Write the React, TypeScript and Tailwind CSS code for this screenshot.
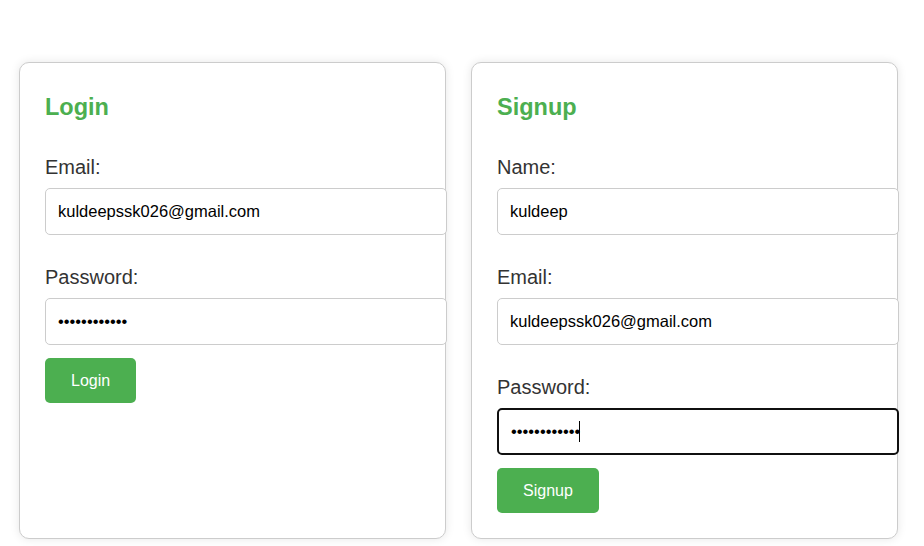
import React from "react";

const font = { fontFamily: '"Liberation Sans", Arial, sans-serif' };

type Field = { label: string; type: string; value: string; focused?: boolean };

const loginFields: Field[] = [
  { label: "Email:", type: "email", value: "kuldeepssk026@gmail.com" },
  { label: "Password:", type: "password", value: "kuldeep12345" },
];

const signupFields: Field[] = [
  { label: "Name:", type: "text", value: "kuldeep" },
  { label: "Email:", type: "email", value: "kuldeepssk026@gmail.com" },
  { label: "Password:", type: "password", value: "kuldeep12345", focused: true },
];

function FormCard({ title, fields, action }: { title: string; fields: Field[]; action: string }) {
  return (
    <div className="w-[427px] rounded-[10px] border border-[#cccccc] bg-white pt-[30px] px-[25px] pb-[25px] shadow-[0_0_10px_rgba(0,0,0,0.1)]">
      <h2 className="text-[23.5px] leading-[28px] font-bold text-[#4caf50] mb-[36px]">{title}</h2>
      {fields.map((f, i) => (
        <div key={i} className={i === fields.length - 1 ? "mb-[13px]" : "mb-[32px]"}>
          <label className="block text-[20px] leading-[21px] text-[#333333] mb-[10px]">{f.label}</label>
          <div className="relative">
            <input
              type={f.type}
              defaultValue={f.value}
              readOnly
              className={
                "block w-[402px] h-[47px] px-[12px] text-[16.5px] text-black bg-white rounded-[5px] outline-none " +
                (f.focused ? "border-2 border-[#101010] px-[11px]" : "border border-[#cccccc]")
              }
              style={font}
            />
            {f.focused && <span className="absolute left-[82px] top-[13px] h-[21px] w-[1px] bg-black" />}
          </div>
        </div>
      ))}
      <button className="h-[45px] px-[26px] rounded-[5px] bg-[#4caf50] text-white text-[16px]" style={font}>
        {action}
      </button>
    </div>
  );
}

export default function App() {
  return (
    <div className="min-h-[546px] bg-white pt-[62px] pl-[19px]" style={font}>
      <div className="flex gap-[25px] items-stretch">
        <FormCard title="Login" fields={loginFields} action="Login" />
        <FormCard title="Signup" fields={signupFields} action="Signup" />
      </div>
    </div>
  );
}
